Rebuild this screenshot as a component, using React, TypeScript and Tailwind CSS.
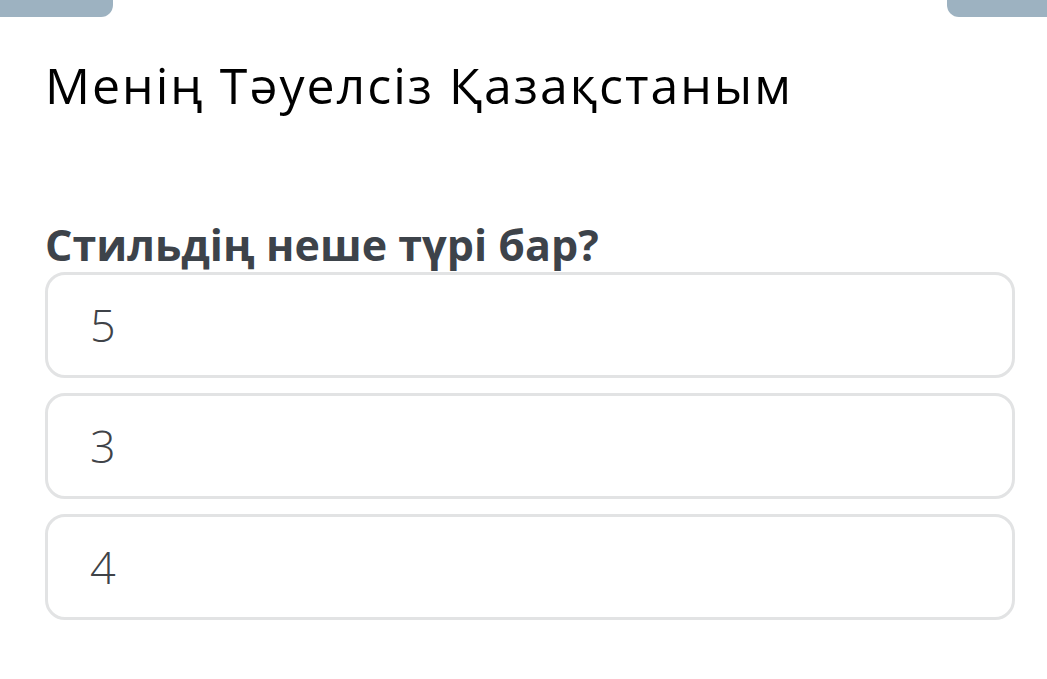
export default function App() {
  const answers = ["5", "3", "4"];
  return (
    <div className="relative w-[1047px] h-[679px] overflow-hidden bg-white">
      {/* top tabs peeking in */}
      <div className="absolute left-0 top-0 w-[113px] h-[17px] bg-[#9db2c1] rounded-br-[12px]" />
      <div className="absolute right-0 top-0 w-[100px] h-[17px] bg-[#9db2c1] rounded-bl-[12px]" />

      <div className="pl-[45px] pr-[32px] pt-[55px]">
        <h1 className="font-['Open_Sans',sans-serif] text-[50px] leading-[60px] tracking-[2px] text-black font-normal">
          Менің Тәуелсіз Қазақстаным
        </h1>

        <h2 className="mt-[106px] mb-[3px] font-['Open_Sans',sans-serif] font-bold text-[43px] leading-[48px] text-[#3d434a]">
          Стильдің неше түрі бар?
        </h2>

        <div className="flex flex-col gap-[15px]">
          {answers.map((a) => (
            <div
              key={a}
              className="h-[106px] rounded-[20px] border-[3px] border-[#e2e3e4] flex items-center pl-[42px]"
            >
              <span className="font-['Open_Sans',sans-serif] font-light text-[45px] text-[#3f4348]">{a}</span>
            </div>
          ))}
        </div>
      </div>
    </div>
  );
}
